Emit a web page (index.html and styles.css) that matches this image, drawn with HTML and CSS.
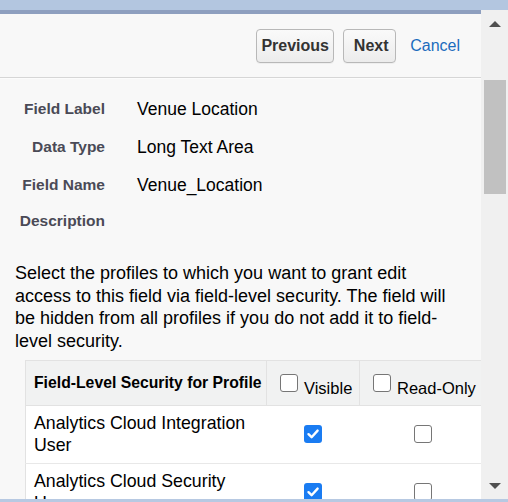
FILE: index.html
```html
<!DOCTYPE html>
<html>
<head>
<meta charset="utf-8">
<link rel="stylesheet" href="styles.css">
</head>
<body>
<div class="topbar"></div>
<div class="frame">
  <div class="viewport">
    <div class="strip"></div>
    <div class="header">
      <button class="btn prev">Previous</button>
      <button class="btn next">Next</button>
      <a class="cancel">Cancel</a>
    </div>
    <div class="content">
      <div class="details">
        <div class="label">Field Label</div><div class="value">Venue Location</div>
        <div class="label">Data Type</div><div class="value">Long Text Area</div>
        <div class="label">Field Name</div><div class="value">Venue_Location</div>
        <div class="label">Description</div><div class="value"></div>
      </div>
      <p class="intro">Select the profiles to which you want to grant edit access to this field via field-level security. The field will be hidden from all profiles if you do not add it to field-level security.</p>
      <table class="fls">
        <colgroup><col class="c1"><col class="c2"><col class="c3"></colgroup>
        <thead>
          <tr>
            <th class="name">Field-Level Security for Profile</th>
            <th class="chk"><span class="cb"></span>Visible</th>
            <th class="chk"><span class="cb"></span>Read-Only</th>
          </tr>
        </thead>
        <tbody>
          <tr>
            <td class="name">Analytics Cloud Integration User</td>
            <td class="center"><span class="cb on"><svg viewBox="0 0 18 18" width="18" height="18"><path d="M4.5 9.2 L7.6 12.2 L13.6 5.6" fill="none" stroke="#fff" stroke-width="2.4" stroke-linecap="round" stroke-linejoin="round"/></svg></span></td>
            <td class="center"><span class="cb"></span></td>
          </tr>
          <tr>
            <td class="name">Analytics Cloud Security User</td>
            <td class="center"><span class="cb on"><svg viewBox="0 0 18 18" width="18" height="18"><path d="M4.5 9.2 L7.6 12.2 L13.6 5.6" fill="none" stroke="#fff" stroke-width="2.4" stroke-linecap="round" stroke-linejoin="round"/></svg></span></td>
            <td class="center"><span class="cb"></span></td>
          </tr>
        </tbody>
      </table>
    </div>
  </div>
  <div class="scrollbar">
    <div class="arrow up"></div>
    <div class="thumb"></div>
    <div class="track"></div>
    <div class="arrow down"></div>
  </div>
</div>
<div class="bottombar"></div>
</body>
</html>
```
FILE: styles.css
```css
* { box-sizing: border-box; }
html, body { margin: 0; padding: 0; }
body {
  width: 508px;
  height: 502px;
  overflow: hidden;
  background: #f8f8f8;
  font-family: "Liberation Sans", Arial, sans-serif;
  color: #000;
}
.topbar {
  height: 10px;
  background: #b3c6e0;
}
.frame {
  display: flex;
  height: 489px;
}
.viewport {
  width: 481px;
  overflow: hidden;
  background: #f8f8f8;
  display: flex;
  flex-direction: column;
}
.strip {
  height: 4px;
  background: #8e9fbf;
  flex: none;
}
.header {
  flex: none;
  height: 64px;
  border-bottom: 1px solid #d6d6d6;
  display: flex;
  align-items: center;
  justify-content: flex-end;
  padding: 1px 21px 0 0;
}
.btn {
  font-family: "Liberation Sans", Arial, sans-serif;
  font-weight: bold;
  font-size: 16px;
  color: #333;
  height: 34px;
  padding: 0;
  text-align: center;
  border: 1px solid #b8b8b8;
  border-radius: 4px;
  background: linear-gradient(#fafafa, #ececec);
  box-shadow: 0 1px 0 rgba(0,0,0,0.04);
}
.btn.prev { width: 78px; margin-right: 9px; }
.btn.next { width: 53px; padding-left: 3px; margin-right: 14px; }
.cancel {
  color: #1b6cbd;
  font-size: 16px;
}
.content {
  border-top: 1px solid #fcfcfc;
  padding: 16px 0 0 15px;
}
.details {
  display: grid;
  grid-template-columns: 90px auto;
  grid-template-rows: 38px 38px 36px 38px;
  column-gap: 32px;
}
.label {
  text-align: right;
  font-weight: bold;
  font-size: 15.5px;
  color: #4a4a56;
  line-height: 28px;
}
.value {
  font-size: 17.5px;
  line-height: 28px;
}
.intro {
  margin: 17px 0 0 0;
  font-size: 18px;
  line-height: 22.5px;
  width: 444px;
}
.fls {
  margin: 8px 0 0 10px;
  border-collapse: collapse;
  table-layout: fixed;
  width: 460px;
  background: #fff;
  border-top: 1px solid #e2e2e2;
  border-left: 1px solid #e2e2e2;
}
.c1 { width: 241px; }
.c2 { width: 93px; }
.c3 { width: 126px; }
.fls th {
  background: #f1f2f2;
  height: 45px;
  font-size: 15.75px;
  text-align: left;
  border-right: 1px solid #e2e2e2;
  border-bottom: 1px solid #e2e2e2;
  white-space: nowrap;
  padding: 0 0 0 8px;
}
.fls th.name { font-weight: bold; }
.fls th.chk {
  font-weight: normal;
  font-size: 16.5px;
  padding: 6px 0 0 13px;
}
.fls th.chk .cb {
  vertical-align: 2px;
  margin-right: 6px;
}
.fls td {
  font-size: 17.75px;
  line-height: 22px;
  padding: 6px 8px 7px 8px;
  border-bottom: 1px solid #e8e8e8;
  height: 57px;
}
.fls td.center { text-align: center; vertical-align: middle; padding-top: 4px; }
.cb {
  display: inline-block;
  width: 18px;
  height: 18px;
  border: 1.5px solid #767676;
  border-radius: 3px;
  background: #fff;
  vertical-align: middle;
}
.cb.on {
  border: none;
  background: #1a7cf2;
}
.cb svg { display: block; }
.scrollbar {
  width: 27px;
  background: #f0f0f0;
  display: flex;
  flex-direction: column;
  align-items: center;
}
.arrow {
  width: 0;
  height: 0;
  border-left: 6px solid transparent;
  border-right: 6px solid transparent;
  flex: none;
}
.arrow.up {
  margin-top: 11px;
  border-bottom: 6px solid #505050;
}
.arrow.down {
  margin-bottom: 10px;
  border-top: 6px solid #505050;
}
.thumb {
  margin-top: 53px;
  width: 22px;
  height: 114px;
  background: #c1c1c1;
  flex: none;
}
.track { flex: 1; }
.bottombar {
  height: 3px;
  background: #b7c9e2;
}
```
